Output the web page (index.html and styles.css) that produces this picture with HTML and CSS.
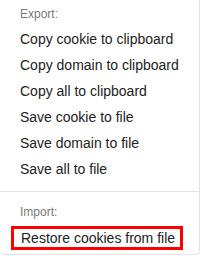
FILE: index.html
```html
<!DOCTYPE html>
<html>
<head>
	<meta charset="utf-8">
	<meta name="viewport" content="width=device-width, initial-scale=1">
	<title>Cookie menu</title>
	<link rel="stylesheet" href="styles.css">
</head>
<body>
	<div class="menu">
		<div class="group group-export">
			<div class="group-title">Export:</div>
			<div class="item">Copy cookie to clipboard</div>
			<div class="item">Copy domain to clipboard</div>
			<div class="item">Copy all to clipboard</div>
			<div class="item">Save cookie to file</div>
			<div class="item">Save domain to file</div>
			<div class="item">Save all to file</div>
		</div>
		<div class="group group-import">
			<div class="group-title">Import:</div>
			<div class="item item-marked"><span>Restore cookies from file</span></div>
		</div>
	</div>
</body>
</html>
```

FILE: styles.css
```css
*{
	margin: 0;
	padding: 0;
	box-sizing: border-box;
}
body{
	background: white;
	font-family: "Liberation Sans", Arial, sans-serif;
	color: #222;
}
.menu{
	width: 200px;
	height: 255px;
	background: white;
	border-right: 1px solid #e2e2e2;
	border-bottom: 1px solid #e2e2e2;
	border-radius: 0 0 4px 4px;
}
.group-export{
	padding-top: 6px;
	padding-bottom: 9px;
	border-bottom: 1px solid #e4e4e4;
}
.group-import{
	padding-top: 12px;
}
.group-title{
	font-size: 12px;
	line-height: 16px;
	color: #7a7a7a;
	padding-left: 20px;
	margin-bottom: 4px;
}
.group-import .group-title{
	margin-bottom: 6px;
}
.item{
	font-size: 14px;
	line-height: 26px;
	height: 26px;
	padding-left: 20px;
	white-space: nowrap;
}
.item-marked{
	padding-left: 11px;
	height: 24px;
	line-height: 18px;
}
.item-marked span{
	display: inline-block;
	width: 172px;
	height: 24px;
	border: 3px solid #f00;
	padding-left: 7px;
}
```
